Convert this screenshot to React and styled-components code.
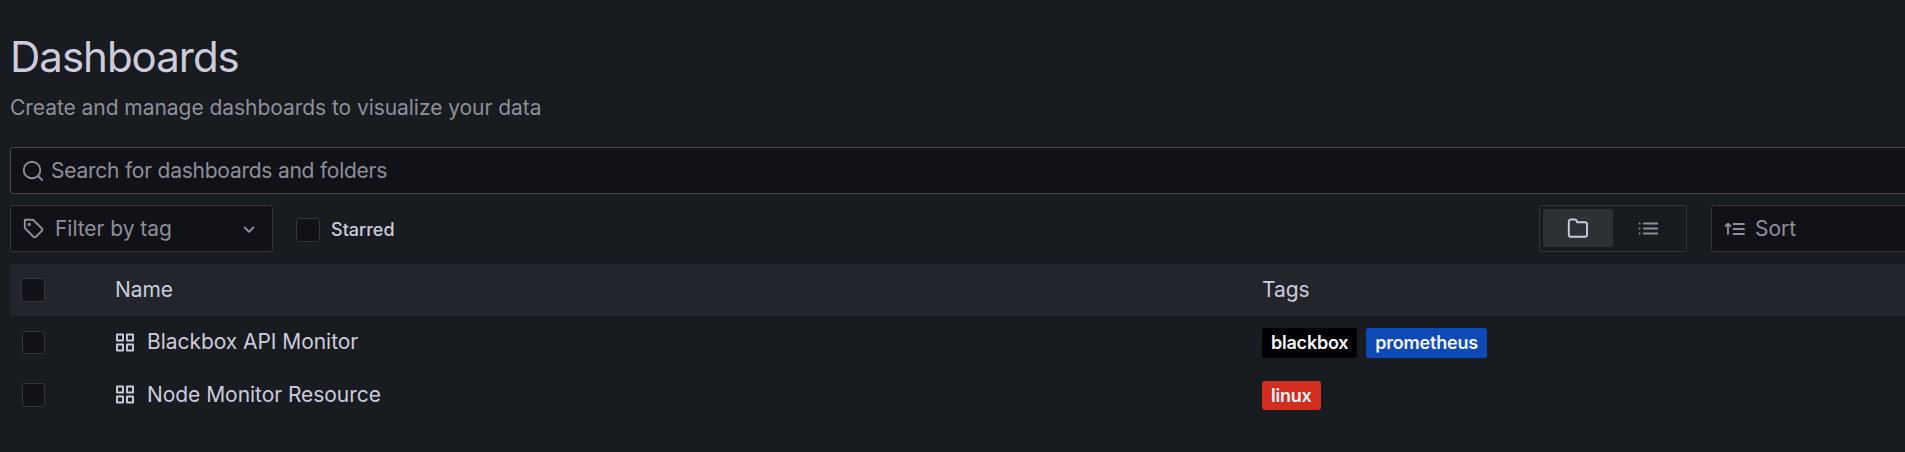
import React from 'react';
import styled, { createGlobalStyle } from 'styled-components';

const GlobalStyle = createGlobalStyle`
  *, *::before, *::after { box-sizing: border-box; }
  body {
    margin: 0;
    background: #181b1f;
    color: #ccccdc;
    font-family: Inter, "Liberation Sans", sans-serif;
    font-size: 21px;
    line-height: 33px;
    letter-spacing: -0.05px;
    overflow: hidden;
  }
`;

const Page = styled.main`
  display: flex;
  flex-direction: column;
  width: 1940px;
  height: 452px;
  padding: 33px 0 0 10px;
`;

const Title = styled.h1`
  margin: 0;
  font-size: 42px;
  line-height: 48px;
  font-weight: 400;
  letter-spacing: -1px;
`;

const Subtitle = styled.p`
  margin: 10px 0 0;
  color: #8e8f9a;
`;

const SearchField = styled.label`
  display: flex;
  align-items: center;
  height: 47px;
  margin-top: 23px;
  padding-left: 11px;
  gap: 7px;
  background: #111217;
  border: 1px solid #49494f;
  border-radius: 3px;
  color: #8e8f9a;
  letter-spacing: -0.24px;
`;

const Toolbar = styled.div`
  display: flex;
  align-items: center;
  height: 47px;
  margin-top: 11px;
`;

const Select = styled.div`
  display: flex;
  align-items: center;
  width: ${(p) => p.$width}px;
  height: 47px;
  padding: 0 11px 0 12px;
  gap: ${(p) => p.$gap}px;
  background: #111217;
  border: 1px solid #36373c;
  border-radius: 3px;
  color: #8e8f9a;
`;

const Grow = styled.span`
  flex: 1;
`;

const Checkbox = styled.span`
  display: block;
  flex: none;
  width: 24px;
  height: 24px;
  background: #111217;
  border: 1px solid #36373c;
  border-radius: 3px;
`;

const RowCheckbox = styled(Checkbox)`
  width: 23px;
  height: 23.6px;
  margin-bottom: 0.4px;
`;

const Starred = styled.div`
  display: flex;
  align-items: center;
  gap: 11px;
  margin: 2px 0 0 23px;
  font-size: 18px;
  line-height: 24px;
  font-weight: 500;
  letter-spacing: 0;
`;

const RadioGroup = styled.div`
  display: flex;
  width: 148px;
  height: 47px;
  margin: 0 24px 0 auto;
  padding: 3px;
  border: 1px solid #36373c;
  border-radius: 3px;
`;

const RadioButton = styled.div`
  display: flex;
  flex: 1;
  align-items: center;
  justify-content: center;
  height: 38px;
  border-radius: 3px;
  color: ${(p) => (p.$active ? '#ccccdc' : '#8e8f9a')};
  background: ${(p) => (p.$active ? '#2d3035' : 'transparent')};
`;

const Table = styled.div`
  margin-top: 12px;
`;

const TableBody = styled.div`
  padding-top: 0.5px;
`;

const Row = styled.div`
  display: grid;
  grid-template-columns: 105px 1147px 1fr;
  align-items: center;
  height: ${(p) => (p.$header ? 52 : 52.5)}px;
  background: ${(p) => (p.$header ? '#22252b' : 'transparent')};
`;

const HeaderLabel = styled.span`
  padding-bottom: 1px;
`;

const CheckCell = styled.div`
  padding-left: ${(p) => p.$inset}px;
`;

const NameCell = styled.div`
  display: flex;
  align-items: center;
  gap: 11px;
  padding-left: 1px;
`;

const Name = styled.span`
  padding-bottom: 2px;
`;

const TagList = styled.div`
  display: flex;
  gap: 9px;
`;

const Tag = styled.span`
  height: 29.5px;
  padding: 0 9px;
  border-radius: 3px;
  background: ${(p) => p.$color};
  color: #f5f5fa;
  font-size: 18px;
  line-height: 29.5px;
  font-weight: 600;
  letter-spacing: -0.22px;
`;

const Icon = styled.svg`
  display: block;
  flex: none;
  fill: none;
  stroke: currentColor;
  stroke-width: 1.9;
  stroke-linecap: round;
  stroke-linejoin: round;
`;

const SearchIcon = () => (
  <Icon width="22" height="22" viewBox="0 0 22 22">
    <circle cx="10" cy="10" r="8.3" />
    <path d="M16 16l4.2 4.2" />
  </Icon>
);

const TagIcon = () => (
  <Icon width="21" height="21" viewBox="0 0 21 21">
    <path d="M1.8 1.8h8.3l8.8 8.7a1.6 1.6 0 0 1 0 2.3l-6 6a1.6 1.6 0 0 1-2.3 0L1.8 10z" />
    <circle cx="6.2" cy="6.4" r="0.7" />
  </Icon>
);

const ChevronIcon = () => (
  <Icon width="24" height="24" viewBox="0 0 24 24">
    <path d="M7.7 10.5l4.3 4.3 4.3-4.3" />
  </Icon>
);

const FolderIcon = () => (
  <Icon width="22" height="22" viewBox="0 0 22 22">
    <path d="M20 7.3v10.5a2 2 0 0 1-2 2H3.8a2 2 0 0 1-2-2V4.500a2 2 0 0 1 2-2h4a2 2 0 0 1 1.900 1.300l.6 1.500H18a2 2 0 0 1 2 2z" />
  </Icon>
);

const ListIcon = () => (
  <Icon width="21" height="21" viewBox="0 0 21 21">
    <path d="M5.8 5.500h13.400M5.800 10.500h13.400M5.800 15.500h13.400M1.600 5.500h.01M1.600 10.500h.01M1.600 15.500h.01" />
  </Icon>
);

const SortIcon = () => (
  <Icon width="22" height="22" viewBox="0 0 22 22">
    <path d="M9.500 6h10.500M9.500 11h10.500M9.500 16h10.500M4 16V5.700M1.600 8L4 5.600 6.400 8" />
  </Icon>
);

const AppsIcon = () => (
  <Icon width="20" height="20" viewBox="0 0 20 20">
    <path d="M1 1.500h6v6h-6zM11 1.500h6v6h-6zM1 11.500h6v6h-6zM11 11.500h6v6h-6z" />
  </Icon>
);

const dashboards = [
  {
    name: 'Blackbox API Monitor',
    tags: [
      { label: 'blackbox', color: '#000000' },
      { label: 'prometheus', color: '#0d4ab5' },
    ],
  },
  { name: 'Node Monitor Resource', tags: [{ label: 'linux', color: '#d32d20' }] },
];

export default function App() {
  return (
    <>
      <GlobalStyle />
      <Page>
        <Title>Dashboards</Title>
        <Subtitle>Create and manage dashboards to visualize your data</Subtitle>
        <SearchField>
          <SearchIcon />
          <span>Search for dashboards and folders</span>
        </SearchField>
        <Toolbar>
          <Select $width={263} $gap={11}>
            <TagIcon />
            <Grow>Filter by tag</Grow>
            <ChevronIcon />
          </Select>
          <Starred>
            <Checkbox />
            <span>Starred</span>
          </Starred>
          <RadioGroup>
            <RadioButton $active>
              <FolderIcon />
            </RadioButton>
            <RadioButton>
              <ListIcon />
            </RadioButton>
          </RadioGroup>
          <Select $width={229} $gap={9}>
            <SortIcon />
            <Grow>Sort</Grow>
          </Select>
        </Toolbar>
        <Table>
          <Row $header>
            <CheckCell $inset={11}>
              <Checkbox />
            </CheckCell>
            <HeaderLabel>Name</HeaderLabel>
            <HeaderLabel>Tags</HeaderLabel>
          </Row>
          <TableBody>
            {dashboards.map((item) => (
              <Row key={item.name}>
                <CheckCell $inset={12}>
                  <RowCheckbox />
                </CheckCell>
                <NameCell>
                  <AppsIcon />
                  <Name>{item.name}</Name>
                </NameCell>
                <TagList>
                  {item.tags.map((tag) => (
                    <Tag key={tag.label} $color={tag.color}>
                      {tag.label}
                    </Tag>
                  ))}
                </TagList>
              </Row>
            ))}
          </TableBody>
        </Table>
      </Page>
    </>
  );
}
